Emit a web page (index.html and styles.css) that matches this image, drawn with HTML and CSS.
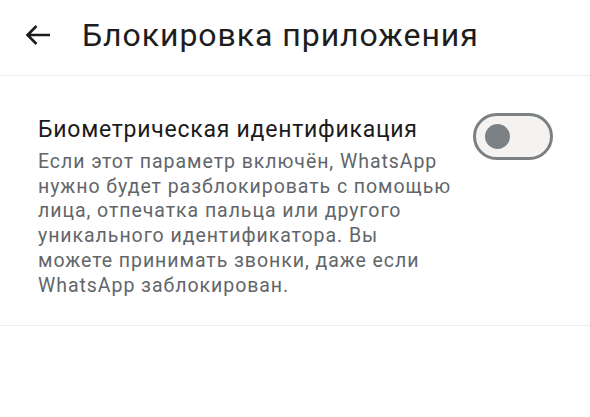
FILE: index.html
```html
<!DOCTYPE html>
<html lang="ru">
<head>
<meta charset="utf-8">
<link rel="stylesheet" href="styles.css">
</head>
<body>
<header class="appbar">
  <span class="back" aria-label="Назад">
    <svg width="26" height="22" viewBox="0 0 26 22"><path d="M25 11H2.5M11.5 2L2.5 11l9 9" fill="none" stroke="#1c1c1c" stroke-width="2.6" stroke-linecap="butt" stroke-linejoin="miter"/></svg>
  </span>
  <h1 class="title">Блокировка приложения</h1>
</header>
<section class="setting">
  <div class="texts">
    <div class="label">Биометрическая идентификация</div>
    <p class="desc">Если этот параметр включён, WhatsApp<br>нужно будет разблокировать с помощью<br>лица, отпечатка пальца или другого<br>уникального идентификатора. Вы<br>можете принимать звонки, даже если<br>WhatsApp заблокирован.</p>
  </div>
  <div class="switch"><span class="knob"></span></div>
</section>
</body>
</html>
```
FILE: styles.css
```css
html, body {
  margin: 0;
  padding: 0;
  background: #ffffff;
}
body {
  font-family: Roboto, "Noto Sans", sans-serif;
  width: 590px;
  height: 417px;
  overflow: hidden;
}
.appbar {
  box-sizing: border-box;
  height: 76px;
  padding: 0 0 6px 25px;
  display: flex;
  align-items: center;
  border-bottom: 1px solid #ececec;
}
.back {
  display: flex;
  width: 26px;
  height: 22px;
  margin-right: 31px;
}
.title {
  margin: 0;
  font-weight: 400;
  font-size: 32px;
  letter-spacing: 0.95px;
  color: #1d1d1d;
  line-height: 38px;
  white-space: nowrap;
}
.setting {
  display: flex;
  align-items: flex-start;
  justify-content: space-between;
  padding: 37px 37px 27px 38px;
  border-bottom: 1px solid #ececec;
}
.texts {
  padding-top: 4px;
  width: 430px;
  white-space: nowrap;
}
.label {
  font-size: 23px;
  letter-spacing: 0.75px;
  line-height: 26px;
  color: #1b1b1b;
}
.desc {
  margin: 7px 0 0;
  font-size: 19.5px;
  letter-spacing: 0.95px;
  line-height: 24.7px;
  color: #62666a;
}
.switch {
  box-sizing: border-box;
  flex-shrink: 0;
  width: 80px;
  height: 47px;
  border: 3px solid #7b8084;
  border-radius: 24px;
  background: #f4f3f2;
  display: flex;
  align-items: center;
  padding-left: 9px;
}
.knob {
  width: 25px;
  height: 25px;
  border-radius: 50%;
  background: #7b8185;
}
```
